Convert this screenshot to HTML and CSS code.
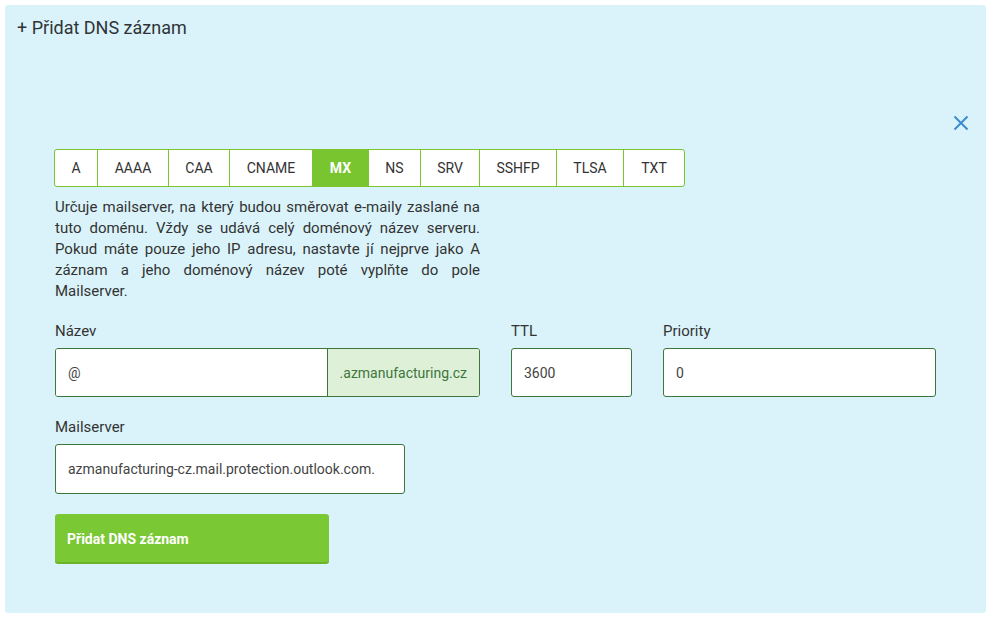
FILE: index.html
```html
<!DOCTYPE html>
<html lang="cs">
<head>
<meta charset="utf-8">
<title>Přidat DNS záznam</title>
<link rel="stylesheet" href="styles.css">
</head>
<body>
<div class="header">
  <div class="header-title">+ Přidat DNS záznam</div>
</div>
<div class="panel">
  <button class="close" aria-label="Zavřít">
    <svg width="16" height="16" viewBox="0 0 16 16"><path d="M1.5 1.5 L14.5 14.5 M14.5 1.5 L1.5 14.5" stroke="#3b8bd0" stroke-width="2" fill="none"/></svg>
  </button>
  <div class="tabs">
    <div class="tab">A</div>
    <div class="tab">AAAA</div>
    <div class="tab">CAA</div>
    <div class="tab">CNAME</div>
    <div class="tab active">MX</div>
    <div class="tab">NS</div>
    <div class="tab">SRV</div>
    <div class="tab">SSHFP</div>
    <div class="tab">TLSA</div>
    <div class="tab">TXT</div>
  </div>
  <p class="desc">Určuje mailserver, na který budou směrovat e-maily zaslané na tuto doménu. Vždy se udává celý doménový název serveru. Pokud máte pouze jeho IP adresu, nastavte jí nejprve jako A záznam a jeho doménový název poté vyplňte do pole Mailserver.</p>
  <div class="row">
    <div class="field f-name">
      <label class="label">Název</label>
      <div class="group">
        <div class="input grow">@</div>
        <div class="suffix">.azmanufacturing.cz</div>
      </div>
    </div>
    <div class="field f-ttl">
      <label class="label">TTL</label>
      <div class="input box">3600</div>
    </div>
    <div class="field f-prio">
      <label class="label">Priority</label>
      <div class="input box">0</div>
    </div>
  </div>
  <div class="field f-mail">
    <label class="label">Mailserver</label>
    <div class="input box">azmanufacturing-cz.mail.protection.outlook.com.</div>
  </div>
  <button class="submit">Přidat DNS záznam</button>
</div>
</body>
</html>
```
FILE: styles.css
```css
* { box-sizing: border-box; }
html, body { margin: 0; padding: 0; background: #fff; }
body {
  padding: 5px 5px 0 5px;
  font-family: Roboto, "Liberation Sans", sans-serif;
  color: #333;
  font-size: 14px;
}
.header {
  background: #daf3fa;
  height: 93px;
  border-radius: 3px 3px 0 0;
  padding: 13px 12px 0;
}
.header-title {
  font-size: 18px;
  line-height: 20px;
  color: #2f3338;
}
.panel {
  background: #daf3fa;
  border-radius: 0 0 3px 3px;
  padding: 51px 50px 49px 50px;
  position: relative;
  height: 515px;
}
.close {
  position: absolute;
  top: 16px;
  right: 16px;
  width: 18px;
  height: 18px;
  padding: 1px;
  border: 0;
  background: none;
  display: flex;
}
.tabs {
  display: flex;
  width: max-content;
  border: 1px solid #7ac532;
  border-radius: 3px;
  background: #fff;
  margin-left: -1px;
}
.tab {
  height: 36px;
  line-height: 36px;
  border-left: 1px solid #7ac532;
  color: #333;
  text-align: center;
}
.tab:first-child { border-left: 0; }
.tab:nth-child(1) { width: 42px; }
.tab:nth-child(2) { width: 71px; }
.tab:nth-child(3) { width: 61px; }
.tab:nth-child(4) { width: 83px; }
.tab:nth-child(5) { width: 56px; }
.tab:nth-child(6) { width: 52px; }
.tab:nth-child(7) { width: 59px; }
.tab:nth-child(8) { width: 77px; }
.tab:nth-child(9) { width: 67px; }
.tab:nth-child(10) { width: 61px; }
.tab.active {
  background: #78c530;
  color: #fff;
  font-weight: bold;
  border-left-color: #78c530;
}
.desc {
  margin: 10px 0 0;
  width: 425px;
  font-size: 15px;
  line-height: 21px;
  text-align: justify;
  color: #333;
}
.row {
  display: flex;
  gap: 31px;
  margin-top: 19px;
}
.field { display: flex; flex-direction: column; }
.label {
  font-size: 15px;
  line-height: 21px;
  margin-bottom: 6px;
  color: #333;
}
.f-name { width: 425px; }
.f-ttl { width: 121px; }
.f-prio { width: 273px; }
.f-mail { width: 350px; margin-top: 20px; }
.group {
  display: flex;
  height: 49px;
  border: 1px solid #3c763d;
  border-radius: 3px;
  overflow: hidden;
  background: #fff;
}
.input {
  height: 49px;
  display: flex;
  align-items: center;
  padding: 0 12px;
  color: #444;
  background: #fff;
}
.input.grow { flex: 1; height: auto; }
.input.box {
  border: 1px solid #3c763d;
  border-radius: 3px;
}
.f-mail .input.box { height: 50px; }
.suffix {
  display: flex;
  align-items: center;
  padding: 0 12px;
  background: #dff0d8;
  border-left: 1px solid #3c763d;
  color: #3c763d;
}
.submit {
  margin-top: 20px;
  width: 274px;
  height: 50px;
  border: 0;
  border-bottom: 2px solid #6cb32a;
  border-radius: 3px;
  background: #7ac833;
  color: #fff;
  font-family: Roboto, "Liberation Sans", sans-serif;
  font-weight: bold;
  font-size: 14px;
  text-align: left;
  padding: 2px 12px 0;
}
```
